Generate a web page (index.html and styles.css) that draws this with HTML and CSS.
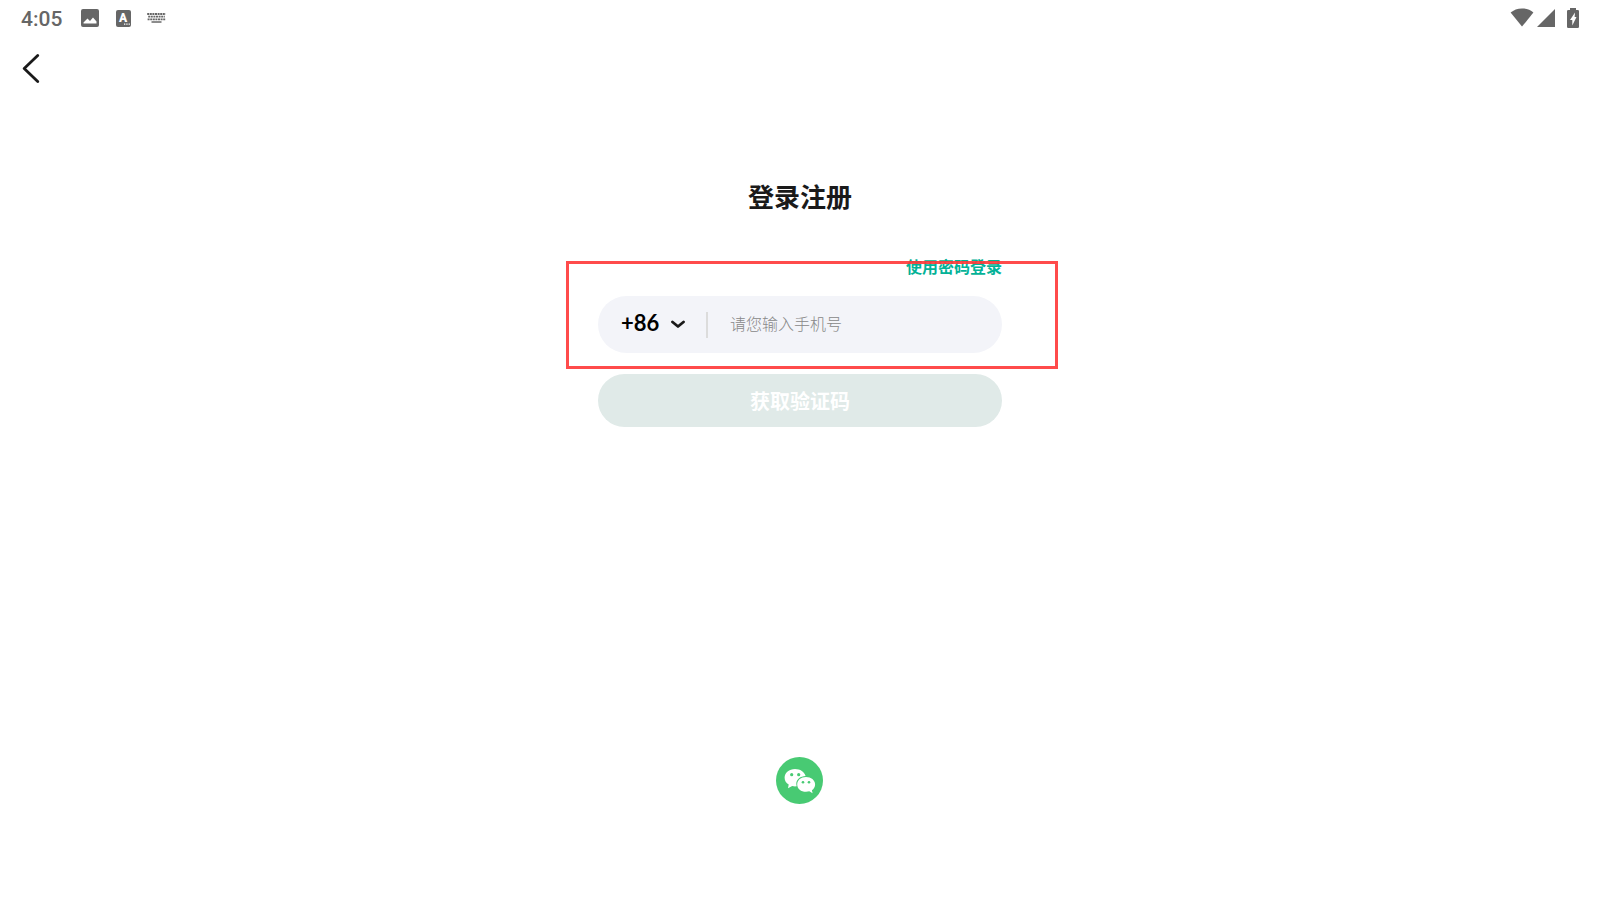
FILE: index.html
```html
<!DOCTYPE html>
<html lang="zh-CN">
<head>
<meta charset="utf-8">
<meta name="viewport" content="width=device-width, initial-scale=1">
<title>登录注册</title>
<link rel="stylesheet" href="styles.css">
</head>
<body>
<div class="screen">
  <div class="status">
    <div class="status-left">
      <time class="clock">4:05</time>
      <svg class="icon-photo" width="18" height="18" viewBox="0 0 18 18" aria-hidden="true"><path fill="#666" fill-rule="evenodd" d="M2 0h14a2 2 0 0 1 2 2v14a2 2 0 0 1-2 2H2a2 2 0 0 1-2-2V2a2 2 0 0 1 2-2zM2.500 14.500h13V12.500L12 8.500 9 12 6.500 9.500 2.500 13.500z"/></svg>
      <svg class="icon-letter" width="15" height="17" viewBox="0 0 15 17" aria-hidden="true"><rect width="15" height="17" rx="2" fill="#666"/><text class="letter" x="7" y="12" text-anchor="middle">A</text><path fill="#fff" d="M8 13.500h1.300v1.300H8zM10.300 13.500h1.300v1.300h-1.300zM12.600 13.500h1.300v1.300h-1.300z"/></svg>
      <svg class="icon-keys" width="19" height="10" viewBox="0 0 19 10" aria-hidden="true"><g fill="none" stroke="#666" stroke-width="1.800"><path stroke-dasharray="2 .6" d="M.2 1h18.400"/><path stroke-dasharray="2 .6" d="M1.200 3.700h16.600"/><path stroke-dasharray="2 .6" d="M.6 6.400h17.800"/><path stroke-width="1.500" d="M4.500 9h10"/></g></svg>
    </div>
    <div class="status-right">
      <svg width="24" height="20" viewBox="0 0 24 20" aria-hidden="true"><path fill="#666" d="M12 18.600 .6 4.600C3.500 1.900 7.500.4 12 .4S20.500 1.900 23.400 4.600z"/></svg>
      <svg width="18" height="18" viewBox="0 0 18 18" aria-hidden="true"><path fill="#666" d="M18 0v18H0z"/></svg>
      <svg class="icon-battery" width="12" height="20" viewBox="0 0 12 20" aria-hidden="true"><path fill="#666" d="M3 0h6v2H10.500A1.300 1.300 0 0 1 12 3.300V18.700A1.300 1.300 0 0 1 10.700 20H1.300A1.300 1.300 0 0 1 0 18.700V3.300A1.300 1.300 0 0 1 1.300 2H3z"/><path fill="#fff" d="M8 4.500 3 12H5.300V17.500L9.500 9H7.600z"/></svg>
    </div>
  </div>
  <header class="nav">
    <button class="back" type="button" aria-label="返回"><svg width="18" height="30" viewBox="0 0 18 30" aria-hidden="true"><path fill="none" stroke="#1a1a1a" stroke-width="2.800" stroke-linecap="round" stroke-linejoin="round" d="M15.700 1.500 2.200 14.500 15.700 27.500"/></svg></button>
  </header>
  <main class="main">
    <h1 class="title">登录注册</h1>
    <form class="form">
      <div class="entry">
        <a class="switch" href="#">使用密码登录</a>
        <div class="phone">
          <span class="code">
            <select class="code-select" aria-label="国家区号"><option>+86</option></select>
            <svg class="chevron" width="14" height="9" viewBox="0 0 14 9" aria-hidden="true"><path fill="none" stroke="#1a1a1a" stroke-width="2.800" stroke-linecap="round" stroke-linejoin="round" d="M1.500 2 7 6.500 12.500 2"/></svg>
          </span>
          <input class="number" type="tel" aria-label="手机号" placeholder="请您输入手机号">
        </div>
        <div class="highlight"></div>
      </div>
      <button class="submit" type="button">获取验证码</button>
    </form>
  </main>
  <footer class="social">
    <button class="wechat" type="button" aria-label="微信登录"><svg width="48" height="48" viewBox="0 0 48 48" aria-hidden="true"><circle cx="23.500" cy="23.500" r="23.500" fill="#48ca73"/><path fill="#fff" d="M19 12C13.200 12 8.600 15.800 8.600 20.700c0 2.900 1.500 5.300 4.100 6.900L12 31.300l4.200-2.300c1.700.4 2.800.5 4.500.3a8 8 0 0 1-.4-2.500c0-4.200 4.100-7.600 9.300-7.700C28.500 14.800 24.200 12 19 12z"/><path fill="#fff" d="M30 20c-5 0-8.800 3.200-8.800 7.400s3.800 7.400 8.800 7.400c1.200 0 2.300-.2 3.300-.5l3.300 2-.7-3.100c1.900-1.400 3.200-3.400 3.200-5.800C39.100 23.200 35 20 30 20z"/><g fill="#48ca73"><circle cx="15.700" cy="17.700" r="1.600"/><circle cx="22.700" cy="17.700" r="1.600"/><circle cx="27" cy="25.300" r="1.300"/><circle cx="33" cy="25.300" r="1.300"/></g></svg></button>
  </footer>
</div>
</body>
</html>
```
FILE: styles.css
```css
* { box-sizing: border-box; }
body {
  margin: 0;
  background: #fff;
  color: #1a1a1a;
  font-family: "Noto Sans CJK SC", sans-serif;
}
button, input, select {
  margin: 0;
  padding: 0;
  border: 0;
  background: none;
  font-family: inherit;
}
svg { display: block; }
.screen {
  display: flex;
  flex-direction: column;
  min-height: 100vh;
}
.status {
  display: flex;
  justify-content: space-between;
  align-items: center;
  height: 36px;
  padding: 0 21px;
}
.status-left, .status-right {
  display: flex;
  align-items: center;
}
.clock {
  color: #666;
  font: 500 21px/36px Roboto, sans-serif;
  padding-top: 1px;
}
.icon-photo { margin-left: 19px; }
.icon-letter { margin-left: 17px; }
.letter {
  fill: #fff;
  font: 900 12px Roboto, sans-serif;
}
.icon-keys { margin-left: 16px; }
.status-right { gap: 3px; }
.icon-battery { margin-left: 9px; }
.nav { padding: 18px 22px; }
.back {
  display: block;
  cursor: pointer;
}
.main {
  display: flex;
  flex-direction: column;
  align-items: center;
  padding: 74px 24px 24px;
}
.title {
  margin: 0 0 40px;
  font-size: 26px;
  line-height: 40px;
  font-weight: 700;
}
.form {
  width: 100%;
  max-width: 404px;
}
.entry {
  position: relative;
  display: flex;
  flex-direction: column;
  margin-bottom: 21px;
}
.switch {
  align-self: flex-end;
  margin-bottom: 20px;
  color: #04b297;
  font-size: 16px;
  line-height: 20px;
  font-weight: 700;
  text-decoration: none;
}
.phone {
  display: flex;
  align-items: center;
  height: 57px;
  padding: 0 23px;
  border-radius: 29px;
  background: #f3f4f9;
}
.code {
  display: flex;
  align-items: center;
  height: 26px;
  padding-right: 21px;
  border-right: 2px solid #dcdcdc;
}
.code-select {
  width: 50px;
  padding-bottom: 3px;
  appearance: none;
  color: #000;
  font: 700 22px/26px Lato, sans-serif;
}
.number {
  flex: 1;
  min-width: 0;
  padding: 0 0 3px 22px;
  outline: 0;
  font-size: 16px;
  line-height: 24px;
  font-weight: 300;
}
.number::placeholder {
  color: #888;
  opacity: 1;
}
.highlight {
  position: absolute;
  inset: 5px -56px -16px -32px;
  border: 3px solid rgba(255, 55, 55, 0.9);
  pointer-events: none;
}
.submit {
  display: block;
  width: 100%;
  height: 53px;
  border-radius: 27px;
  background: #e0eae8;
  color: #fff;
  font-size: 20px;
  line-height: 28px;
  font-weight: 700;
}
.social {
  display: flex;
  justify-content: center;
  margin-top: auto;
  padding-bottom: 95px;
}
.wechat {
  border-radius: 50%;
  cursor: pointer;
}
```
